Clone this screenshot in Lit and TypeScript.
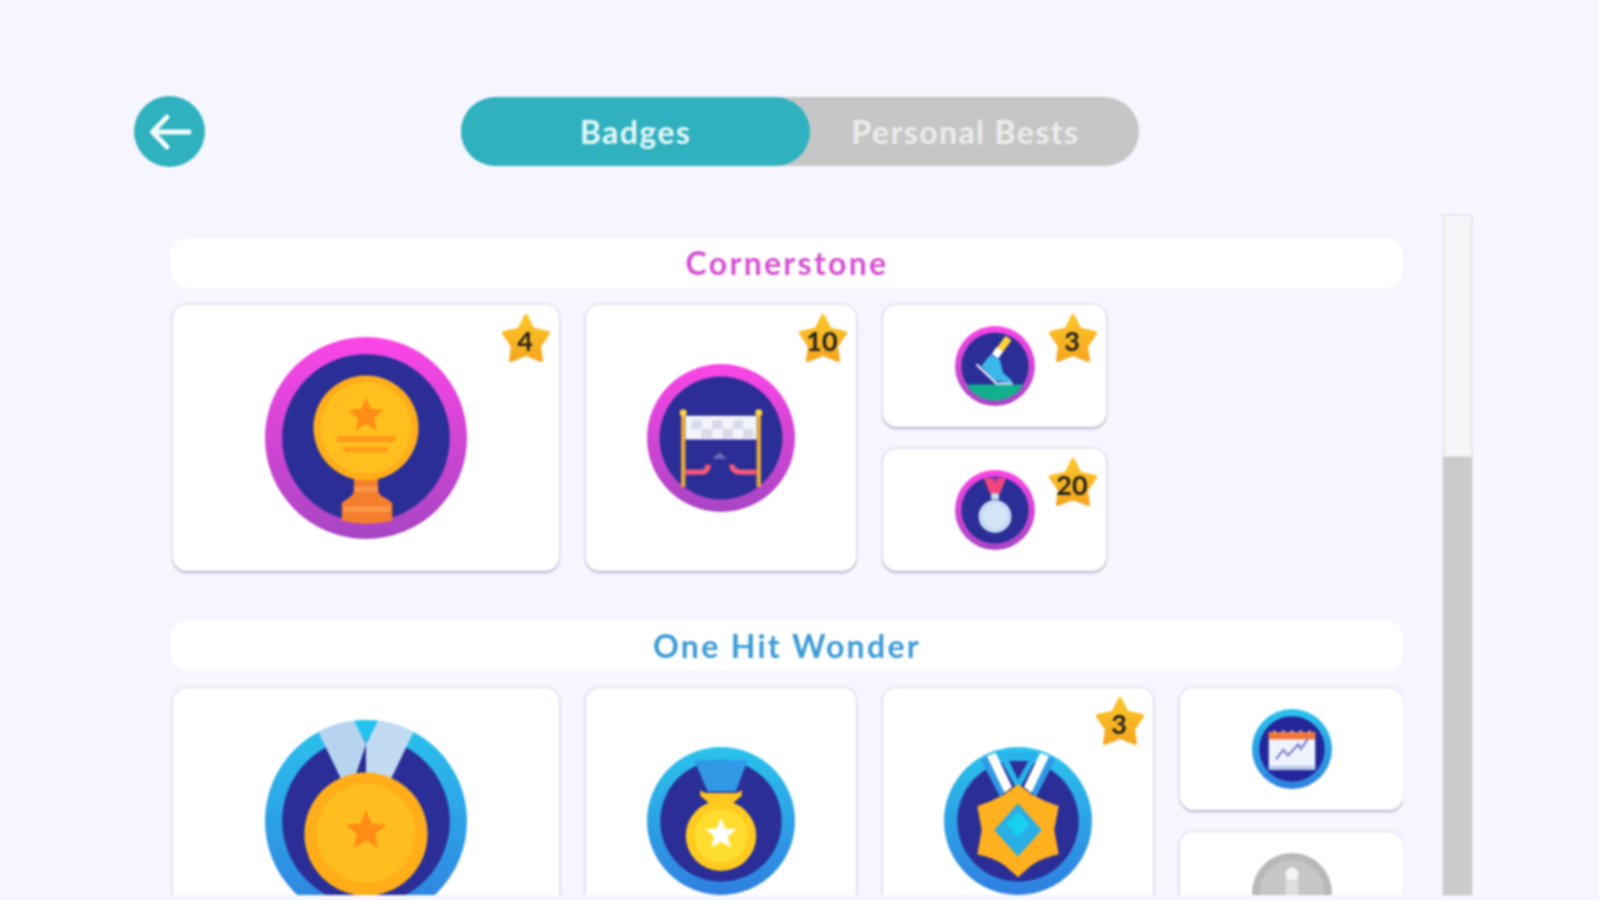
import { LitElement, html, svg, css, nothing } from "lit";
import { customElement, property, state } from "lit/decorators.js";

// five point star around cx,cy, used inside the medal art
const starPoints = (cx: number, cy: number, r: number) => {
  const pts: string[] = [];
  for (let i = 0; i < 10; i++) {
    const rad = i % 2 ? r * 0.45 : r;
    const a = (Math.PI / 5) * i - Math.PI / 2;
    pts.push(`${(cx + rad * Math.cos(a)).toFixed(1)},${(cy + rad * Math.sin(a)).toFixed(1)}`);
  }
  return pts.join(" ");
};

const NAVY = "#2b2e96";

const art = {
  trophy: svg`
    <circle cx="50" cy="50" r="41.5" fill=${NAVY}/>
    <path d="M44 70H56V76Q56 78 60 80L63 82V91Q50 94 38 91V82L41 80Q44 78 44 76Z" fill="#f57d2e"/>
    <path d="M44 74H56V76.5H44ZM39 84H62V86.5H39Z" fill="#fb9a4a"/>
    <circle cx="50" cy="45" r="26" fill="#ffae1a"/>
    <circle cx="50" cy="45" r="22.5" fill="#ffc01f"/>
    <polygon points=${starPoints(50, 39, 9)} fill="#ff8c14"/>
    <rect x="35.5" y="49" width="29" height="3" fill="#ff9a1a"/>
    <rect x="39" y="54.5" width="22" height="2.6" fill="#ff9a1a"/>`,
  finish: svg`
    <circle cx="50" cy="50" r="41.5" fill=${NAVY}/>
    <rect x="23" y="32" width="3" height="51" fill="#e3a93b"/>
    <rect x="74" y="32" width="3" height="51" fill="#e3a93b"/>
    <circle cx="24.5" cy="33" r="2.4" fill="#ffd23a"/>
    <circle cx="75.5" cy="33" r="2.4" fill="#ffd23a"/>
    <rect x="26" y="35" width="48" height="16" fill="#f4f5fb"/>
    <path d="M30 38h7v6h-7zM44 38h7v6h-7zM58 38h7v6h-7zM37 44h7v6h-7zM51 44h7v6h-7zM65 44h7v6h-7z" fill="#d8daea"/>
    <path d="M49 60L54 64H44Z" fill="#6f70b8"/>
    <path d="M26 73H37Q41 73 41.5 68M74 73H63Q58 73 57 68" fill="none" stroke="#f5587a" stroke-width="3.6"/>`,
  shoe: svg`
    <circle cx="50" cy="50" r="42" fill=${NAVY}/>
    <path d="M14 73H86A42 42 0 0 1 14 73Z" fill="#14b08e"/>
    <path d="M67 15L56 30" stroke="#ffd23a" stroke-width="9"/>
    <path d="M56 29L50 38" stroke="#fff" stroke-width="10"/>
    <path d="M44 36L56 42L60 58L71 68L70 71L50 68L33 50Z" fill="#3ab8ea"/>
    <path d="M27 48L52 72H72" fill="none" stroke="#dcebf7" stroke-width="3"/>`,
  silver: svg`
    <circle cx="50" cy="50" r="42" fill=${NAVY}/>
    <path d="M36 10H64L56 30H44Z" fill="#f2457e"/>
    <path d="M47 10H53L50 17Z" fill="#8b3fb8"/>
    <rect x="45" y="29" width="10" height="8" rx="2" fill="#c5dbf2"/>
    <circle cx="50" cy="58" r="20.5" fill="#c5dbf2"/>
    <circle cx="50" cy="58" r="15.5" fill="#d3e4f6"/>`,
  gold: svg`
    <circle cx="50" cy="50" r="41.5" fill=${NAVY}/>
    <path d="M45 0.4H55L50 12Z" fill="#22c3ee"/>
    <path d="M26.5 6A50 50 0 0 1 44 0.4L50 12L44 30L38 30Z" fill="#b6d4f0"/>
    <path d="M73.5 6A50 50 0 0 0 56 0.4L50 12L50 30L62 30Z" fill="#c2dbf3"/>
    <circle cx="50" cy="56.5" r="30.5" fill="#ffae1a"/>
    <circle cx="50" cy="56" r="24.5" fill="#ffbe1f"/>
    <polygon points=${starPoints(50, 55, 10.5)} fill="#ff8c14"/>`,
  yellow: svg`
    <circle cx="50" cy="50" r="41" fill=${NAVY}/>
    <path d="M32 9H68L60 30H41Z" fill="#3199e6"/>
    <path d="M36 29Q38 31 40 31H60Q62 31 64 29V33L58 38H42L36 33Z" fill="#ffc61f"/>
    <circle cx="50" cy="60" r="23.8" fill="#ffcb1f"/>
    <circle cx="50" cy="60" r="18" fill="#ffdd2e"/>
    <polygon points=${starPoints(50, 59, 11)} fill="#fff"/>`,
  jewel: svg`
    <circle cx="50" cy="50" r="41" fill=${NAVY}/>
    <path d="M35 3H65L50 30Z" fill="#26b4ea"/>
    <path d="M44 9.5H57L50 22Z" fill=${NAVY}/>
    <path d="M25 9L30 5L43 28L38 34ZM75 9L70 5L57 28L62 34Z" fill="#2f9ae5"/>
    <path d="M29 6L35 4L46 27L41 31ZM71 6L65 4L54 27L59 31Z" fill="#fff"/>
    <path d="M50 25L59 32Q68 37 77.5 40L74.5 56L77.5 72.5Q66 75 59 80L50 88L41 80Q34 75 22.5 72.5L25.5 56L22.5 40Q32 37 41 32Z" fill="#ffb01e"/>
    <path d="M50 38L66 56L50 74L34 56Z" fill="#29aee6"/>
    <path d="M50 44L58 52L50 61L42 52Z" fill="#19d0ee"/>`,
  calendar: svg`
    <circle cx="50" cy="50" r="41" fill="#23279a"/>
    <rect x="21" y="29" width="58" height="47" fill="#eef3fc"/>
    <rect x="21" y="29" width="58" height="9" fill="#f2743a"/>
    <path d="M28 29v-2M39 29v-2M50 29v-2M61 29v-2M72 29v-2" stroke="#f7c4a8" stroke-width="3"/>
    <rect x="21" y="71" width="58" height="5" fill="#b8c8ee"/>
    <path d="M30 63L39 51L45 58L58 44L61 50L70 37" fill="none" stroke="#7a7fd0" stroke-width="2.6"/>`,
  locked: svg`
    <circle cx="50" cy="50" r="41" fill="#c6c6c6"/>
    <rect x="42" y="27" width="16" height="43" fill="#dedede"/>
    <circle cx="50" cy="26" r="8" fill="#f4f4f4"/>`,
};

type Art = keyof typeof art;
interface Badge { art: Art; size: "l" | "m" | "s"; tone: string; count?: number }

const cornerstone: Badge[] = [
  { art: "trophy", size: "l", tone: "pink", count: 4 },
  { art: "finish", size: "m", tone: "pink", count: 10 },
  { art: "shoe", size: "s", tone: "pink", count: 3 },
  { art: "silver", size: "s", tone: "pink", count: 20 },
];

const oneHit: Badge[] = [
  { art: "gold", size: "l", tone: "blue" },
  { art: "yellow", size: "m", tone: "blue" },
  { art: "jewel", size: "m", tone: "blue", count: 3 },
  { art: "calendar", size: "s", tone: "blue" },
  { art: "locked", size: "s", tone: "grey" },
];

@customElement("badge-card")
export class BadgeCard extends LitElement {
  @property({ type: Object }) badge!: Badge;

  static styles = css`
    :host {
      display: block;
    }
    .card {
      position: relative;
      display: flex;
      align-items: center;
      justify-content: center;
      box-sizing: border-box;
      background: #fff;
      border-radius: 14px;
      box-shadow: 0 0 2px 2px rgba(70, 75, 110, 0.1), 0 2px 2px rgba(70, 75, 110, 0.28);
    }
    .l { width: 386px; height: 266px; }
    .m { width: 270px; height: 266px; }
    .s { width: 223px; height: 122px; }
    .medal {
      display: block;
      border-radius: 50%;
      flex: none;
    }
    .l .medal { width: 202px; height: 202px; }
    .m .medal { width: 148px; height: 148px; }
    .s .medal { width: 80px; height: 80px; }
    .pink { background: linear-gradient(#fb45e6, #a845c4); }
    .blue { background: linear-gradient(#2ac4ec, #2f7fe0); }
    .grey { background: #b8b8b8; }
    svg { display: block; width: 100%; height: 100%; overflow: visible; }
    .star {
      position: absolute;
      top: 8px;
      right: 8px;
      width: 50px;
      height: 51px;
    }
    .count {
      position: absolute;
      top: 9px;
      right: 9px;
      width: 50px;
      height: 51px;
      text-align: center;
      font: 700 27px/54px Lato, sans-serif;
      color: #24221c;
    }
  `;

  render() {
    const b = this.badge;
    return html`
      <div class="card ${b.size}">
        <div class="medal ${b.tone}">
          <svg viewBox="0 0 100 100">${art[b.art]}</svg>
        </div>
        ${b.count == null
          ? nothing
          : html`
              <svg class="star" viewBox="0 0 50 51">
                <defs>
                  <linearGradient id="gold" gradientUnits="userSpaceOnUse" x1="0" y1="0" x2="0" y2="51">
                    <stop offset="0" stop-color="#fbc82a"/>
                    <stop offset="1" stop-color="#f5a31c"/>
                  </linearGradient>
                </defs>
                <path
                  d="M25 3L31.5 16.5L47 20L38 33L40 47L25 41L10 47L12 33L3 20L18.5 16.5Z"
                  fill="url(#gold)"
                  stroke="url(#gold)"
                  stroke-width="4"
                  stroke-linejoin="round"
                />
              </svg>
              <span class="count">${b.count}</span>
            `}
      </div>
    `;
  }
}

@customElement("app-root")
export class AppRoot extends LitElement {
  @state() tab = "badges";

  static styles = css`
    :host {
      display: block;
      width: 1599px;
      height: 900px;
      overflow: hidden;
      background: #f5f6ff;
      font-family: Lato, sans-serif;
    }
    .page {
      height: 900px;
      filter: blur(1px);
    }
    .top {
      display: grid;
      grid-template-columns: 1fr 678px 1fr;
      align-items: center;
      padding: 96px 133px 0 134px;
    }
    .back {
      width: 71px;
      height: 71px;
      padding: 0;
      border: none;
      border-radius: 50%;
      background: #2fb1bf;
      cursor: pointer;
    }
    .back svg { display: block; }
    .toggle {
      display: flex;
      height: 69px;
      border-radius: 35px;
      background: #c6c6c6;
    }
    .toggle button {
      border: none;
      padding: 0;
      background: none;
      border-radius: 35px;
      font: 700 32px Lato, sans-serif;
      letter-spacing: 1.4px;
      color: #ececec;
      cursor: pointer;
    }
    .toggle .first { width: 349px; }
    .toggle .second { flex: 1; padding-right: 18px; }
    .toggle .on { background: #2fb1bf; color: #e3f6f7; }
    .body {
      display: flex;
      gap: 40px;
      height: 680px;
      margin-top: 48px;
      padding-left: 171px;
    }
    .list {
      width: 1232px;
      padding-top: 23px;
      box-sizing: border-box;
      overflow: hidden;
    }
    .title {
      height: 50px;
      margin-bottom: 17px;
      border-radius: 16px;
      background: #fff;
      text-align: center;
      font: 700 32px/50px Lato, sans-serif;
      letter-spacing: 2.3px;
    }
    .pink { color: #d650d2; }
    .blue { color: #3c9bd6; }
    .row {
      display: flex;
      gap: 27px;
      padding: 3px 0 3px 2px;
      margin: -3px 0 47px;
    }
    .stack {
      display: flex;
      flex-direction: column;
      gap: 22px;
    }
    .scroll {
      width: 29px;
      flex: none;
      background: #cbcbcb;
      box-shadow: 0 0 2px rgba(70, 75, 110, 0.2);
    }
    .thumb {
      height: 242px;
      background: #f5f5f7;
      box-shadow: inset 0 0 2px rgba(70, 75, 110, 0.3);
    }
  `;

  // big and mid badges stand alone, the small ones stack in a column
  private renderRow(items: Badge[]) {
    const small = items.filter((b) => b.size === "s");
    return html`
      <div class="row">
        ${items.filter((b) => b.size !== "s").map((b) => html`<badge-card .badge=${b}></badge-card>`)}
        <div class="stack">
          ${small.map((b) => html`<badge-card .badge=${b}></badge-card>`)}
        </div>
      </div>
    `;
  }

  render() {
    return html`
      <div class="page">
        <div class="top">
          <button class="back" aria-label="Back">
            <svg viewBox="0 0 71 71" width="71" height="71">
              <path
                d="M55 36H20M33 21L18.500 36L33 51"
                fill="none"
                stroke="#f2fbfb"
                stroke-width="5"
                stroke-linecap="round"
                stroke-linejoin="round"
              />
            </svg>
          </button>
          <div class="toggle">
            <button class="first ${this.tab === "badges" ? "on" : ""}" @click=${() => (this.tab = "badges")}>Badges</button>
            <button class="second ${this.tab === "bests" ? "on" : ""}" @click=${() => (this.tab = "bests")}>Personal Bests</button>
          </div>
        </div>
        <div class="body">
          <div class="list">
            <div class="title pink">Cornerstone</div>
            ${this.renderRow(cornerstone)}
            <div class="title blue">One Hit Wonder</div>
            ${this.renderRow(oneHit)}
          </div>
          <div class="scroll"><div class="thumb"></div></div>
        </div>
      </div>
    `;
  }
}
